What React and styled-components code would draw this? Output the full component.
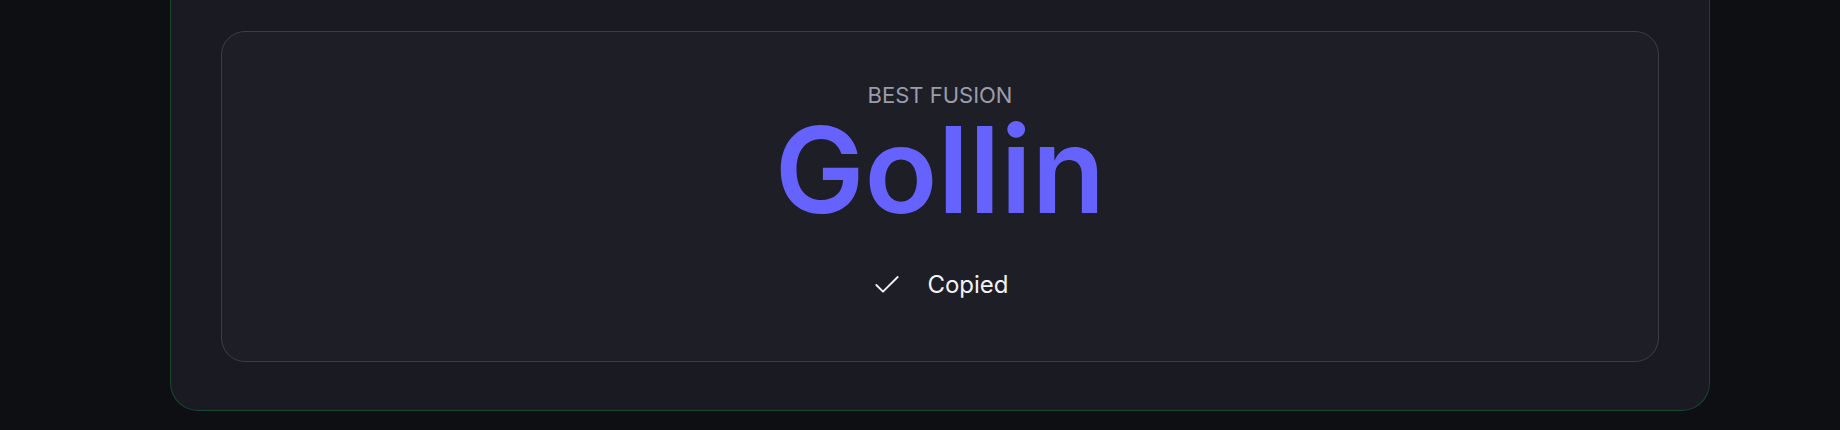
import React from "react";
import styled, { createGlobalStyle } from "styled-components";

const GlobalStyle = createGlobalStyle`
  html, body {
    margin: 0;
    padding: 0;
    background: #0e0f13;
    font-family: Inter, "Noto Sans", sans-serif;
  }
`;

const Page = styled.div`
  min-height: 430px;
  box-sizing: border-box;
  padding: 0 130px 19px 170px;
  background: #0e0f13;
`;

const OuterCard = styled.section`
  box-sizing: border-box;
  background: #1a1a22;
  border: 1px solid #16472f;
  border-top: none;
  border-radius: 0 0 28px 28px;
  padding: 31px 50px 48px;
`;

const ResultCard = styled.div`
  box-sizing: border-box;
  background: #1e1e27;
  border: 1px solid #3d3d45;
  border-radius: 24px;
  padding: 50px 24px 60px;
  display: flex;
  flex-direction: column;
  align-items: center;
`;

const Label = styled.div`
  font-size: 22px;
  line-height: 26px;
  font-weight: 400;
  color: #9b9caa;
`;

const Title = styled.h1`
  margin: 12px 0 0;
  font-size: 120px;
  line-height: 100px;
  font-weight: 600;
  color: #6562fd;
  letter-spacing: 0;
`;

const CopyRow = styled.div`
  margin-top: 49px;
  display: flex;
  align-items: center;
  gap: 24px;
  height: 32px;
  color: #f2f2f5;
`;

const CopyText = styled.span`
  font-size: 24px;
  line-height: 32px;
  font-weight: 400;
`;

const CheckIcon = () => (
  <svg width="32" height="32" viewBox="0 0 24 24" fill="none" stroke="currentColor" strokeWidth="1.4" strokeLinecap="round" strokeLinejoin="round">
    <polyline points="20 6 9 17 4 12" />
  </svg>
);

export default function App() {
  return (
    <>
      <GlobalStyle />
      <Page>
        <OuterCard>
          <ResultCard>
            <Label>BEST FUSION</Label>
            <Title>Gollin</Title>
            <CopyRow>
              <CheckIcon />
              <CopyText>Copied</CopyText>
            </CopyRow>
          </ResultCard>
        </OuterCard>
      </Page>
    </>
  );
}
